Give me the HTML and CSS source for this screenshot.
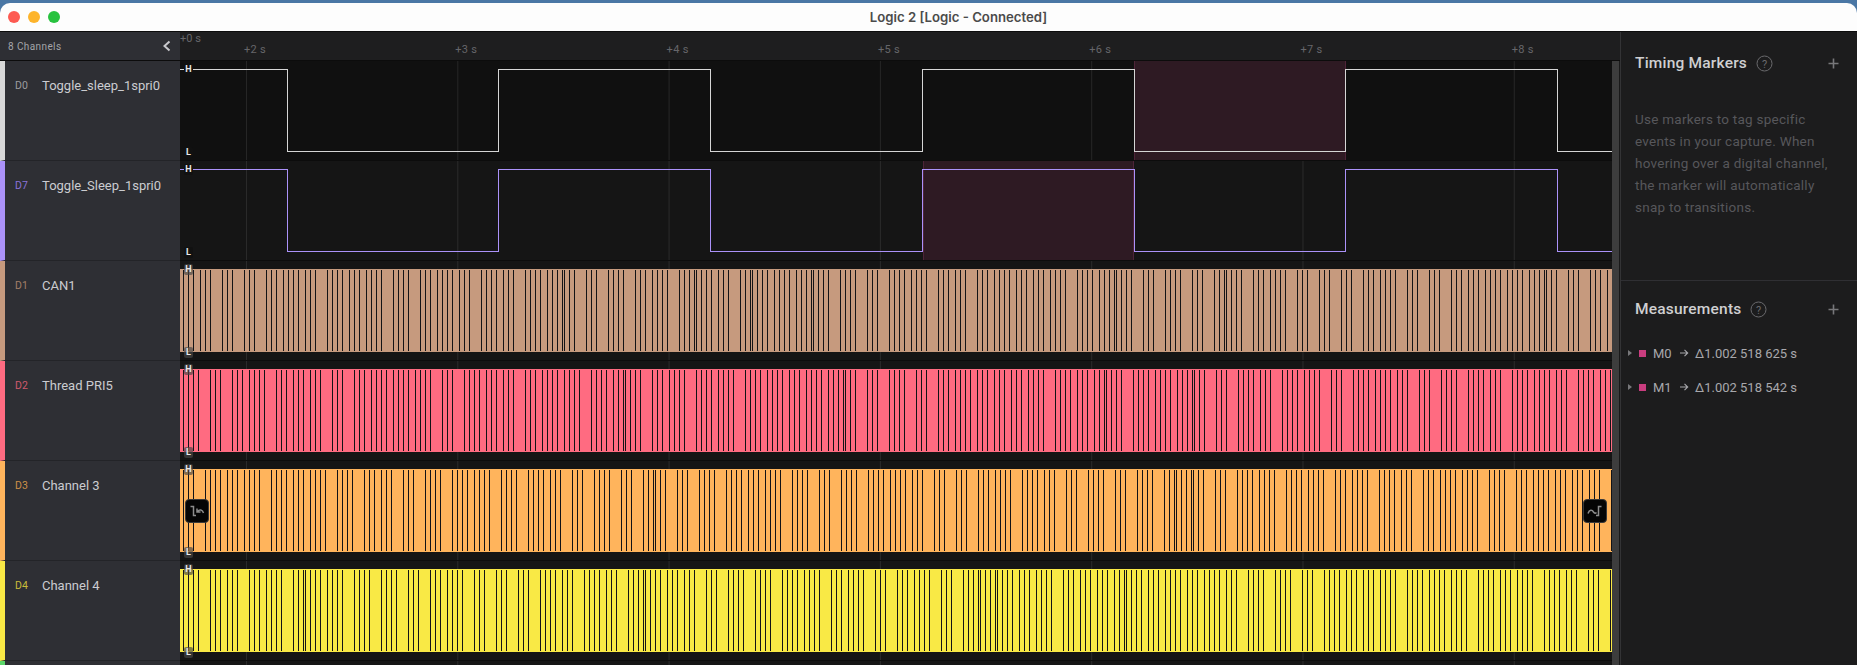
FILE: index.html
```html
<!DOCTYPE html>
<html lang="en">
<head>
  <meta charset="UTF-8" />
  <title>Logic 2</title>
  <link rel="stylesheet" href="styles.css">
</head>
<body>
  <div class="window">
    <div class="titlebar">
      <div class="lights">
        <span class="light red"></span>
        <span class="light yellow"></span>
        <span class="light green"></span>
      </div>
      <div class="title">Logic 2 [Logic - Connected]</div>
    </div>

    <div class="app">
      <div class="sidebar">
        <div class="side-head">
          <span>8 Channels</span>
          <svg class="chevron" width="10" height="12" viewBox="0 0 10 12"><path d="M7.5 1.5 L2.5 6 L7.5 10.5" /></svg>
        </div>
        <div class="chan d0"><span class="chan-id">D0</span><span class="chan-name">Toggle_sleep_1spri0</span></div>
        <div class="chan d7"><span class="chan-id">D7</span><span class="chan-name">Toggle_Sleep_1spri0</span></div>
        <div class="chan d1"><span class="chan-id">D1</span><span class="chan-name">CAN1</span></div>
        <div class="chan d2"><span class="chan-id">D2</span><span class="chan-name">Thread PRI5</span></div>
        <div class="chan d3"><span class="chan-id">D3</span><span class="chan-name">Channel 3</span></div>
        <div class="chan d4"><span class="chan-id">D4</span><span class="chan-name">Channel 4</span></div>
        <div class="chan d5"></div>
      </div>

      <div class="timeline">
        <div class="ruler">
          <div class="ruler-zero">+0 s</div>
          <div class="ruler-ticks">
            <span>+2 s</span><span>+3 s</span><span>+4 s</span><span>+5 s</span><span>+6 s</span><span>+7 s</span><span>+8 s</span>
          </div>
        </div>
        <div class="body">
          <div class="signals">
            <div class="signal first">
              <div class="marker marker-d0"></div>
              <svg class="trace" width="1432" height="99"><path class="stroke-d0" d="M0 8.5 H107.5 V90.5 H318.5 V8.5 H530.5 V90.5 H742.5 V8.5 H954.5 V90.5 H1165.5 V8.5 H1377.5 V90.5 H1432" /></svg>
              <span class="level high plain">H</span><span class="level low plain">L</span>
            </div>
            <div class="signal">
              <div class="marker marker-d7"></div>
              <svg class="trace" width="1432" height="99"><path class="stroke-d7" d="M0 8.5 H107.5 V90.5 H318.5 V8.5 H530.5 V90.5 H742.5 V8.5 H954.5 V90.5 H1165.5 V8.5 H1377.5 V90.5 H1432" /></svg>
              <span class="level high plain">H</span><span class="level low plain">L</span>
            </div>
            <div class="signal">
              <div class="band fill-d1"><svg class="edges" data-seed="11" width="1432" height="83"></svg></div>
              <span class="level high">H</span><span class="level low">L</span>
            </div>
            <div class="signal">
              <div class="band fill-d2"><svg class="edges" data-seed="29" width="1432" height="83"></svg></div>
              <span class="level high">H</span><span class="level low">L</span>
            </div>
            <div class="signal">
              <div class="band fill-d3"><svg class="edges" data-seed="47" width="1432" height="83"></svg></div>
              <span class="level high">H</span><span class="level low">L</span>
              <button class="jump jump-left">
                <svg width="18" height="18" viewBox="0 0 18 18"><path d="M2.5 4.5 H5.5 V13.5 H8 M15.5 11 C14.5 7.5 11.5 7 9.5 9.5 M9 6.5 V10 H12.5" /></svg>
              </button>
              <button class="jump jump-right">
                <svg width="18" height="18" viewBox="0 0 18 18"><path d="M2 11.5 C3.5 7.5 6 7.5 7.5 10 C8.5 11.5 9.5 11.5 10.5 10.5 M10 13.5 H12.5 V4.5 H15.5" /></svg>
              </button>
            </div>
            <div class="signal">
              <div class="band fill-d4"><svg class="edges" data-seed="83" width="1432" height="83"></svg></div>
              <span class="level high">H</span><span class="level low">L</span>
            </div>
            <div class="signal"></div>
          </div>
          <div class="scrollbar"></div>
        </div>
      </div>

      <div class="panel">
        <div class="section timing">
          <div class="section-head">
            <span class="section-title">Timing Markers</span>
            <svg class="help" width="17" height="17" viewBox="0 0 17 17"><circle cx="8.5" cy="8.5" r="7.5" /><text x="8.5" y="12.5" text-anchor="middle">?</text></svg>
            <svg class="plus" width="11" height="11" viewBox="0 0 11 11"><path d="M5.5 0.5 V10.5 M0.5 5.5 H10.5" /></svg>
          </div>
          <p class="hint">Use markers to tag specific events in your capture. When hovering over a digital channel, the marker will automatically snap to transitions.</p>
        </div>
        <div class="section">
          <div class="section-head">
            <span class="section-title">Measurements</span>
            <svg class="help" width="17" height="17" viewBox="0 0 17 17"><circle cx="8.5" cy="8.5" r="7.5" /><text x="8.5" y="12.5" text-anchor="middle">?</text></svg>
            <svg class="plus" width="11" height="11" viewBox="0 0 11 11"><path d="M5.5 0.5 V10.5 M0.5 5.5 H10.5" /></svg>
          </div>
          <div class="measure">
            <span class="caret"></span><span class="swatch"></span><span class="m-name">M0</span>
            <svg class="arrow" width="10" height="10" viewBox="0 0 10 10"><path d="M1 5 H8.5 M5.5 1.8 L8.7 5 L5.5 8.2" /></svg>
            <span class="m-value">Δ1.002 518 625 s</span>
          </div>
          <div class="measure">
            <span class="caret"></span><span class="swatch"></span><span class="m-name">M1</span>
            <svg class="arrow" width="10" height="10" viewBox="0 0 10 10"><path d="M1 5 H8.5 M5.5 1.8 L8.7 5 L5.5 8.2" /></svg>
            <span class="m-value">Δ1.002 518 542 s</span>
          </div>
        </div>
      </div>
    </div>
  </div>

  <script src="trace.js"></script>
</body>
</html>
```

FILE: styles.css
```css
* {
  box-sizing: border-box;
}
body, html {
  margin: 0;
  padding: 0;
  height: 100%;
  overflow: hidden;
  background: #4a77a5;
  font-family: Roboto, sans-serif;
}
.window {
  height: 100%;
  padding-top: 3px;
  display: flex;
  flex-direction: column;
}

/* title bar */
.titlebar {
  flex: 0 0 29px;
  position: relative;
  display: flex;
  align-items: center;
  justify-content: center;
  background: #fdfdfd;
  border-bottom: 1px solid #0c0c0c;
  border-radius: 10px 10px 0 0;
}
.lights {
  position: absolute;
  left: 8px;
  top: 8px;
  display: flex;
  gap: 8px;
}
.light {
  width: 12px;
  height: 12px;
  border-radius: 50%;
}
.light.red { background: #fd5a52; }
.light.yellow { background: #fdb42c; }
.light.green { background: #28c23f; }
.title {
  font-family: Inter, sans-serif;
  font-size: 13.2px;
  font-weight: 600;
  color: #4b4b4b;
  margin: -1px 0 0 60px;
}

.app {
  flex: 1;
  display: flex;
  min-height: 0;
}

/* channel list */
.sidebar {
  flex: 0 0 180px;
  background: #2e2f34;
  overflow: hidden;
}
.side-head {
  height: 29px;
  display: flex;
  align-items: center;
  justify-content: space-between;
  padding: 0 8px;
  font-size: 10px;
  letter-spacing: 0.4px;
  color: #a4a5a9;
  border-bottom: 1px solid #0c0c0c;
}
.chevron path {
  fill: none;
  stroke: #c8c8cc;
  stroke-width: 2;
}
.chan {
  height: 100px;
  padding: 17px 0 0 10px;
  display: flex;
  align-items: flex-start;
  border-left: 5px solid;
  border-bottom: 1px solid #232428;
}
.chan-id {
  width: 27px;
  font-size: 10.5px;
  line-height: 16px;
}
.chan-name {
  font-size: 13px;
  line-height: 16px;
  color: #cbccd0;
}
.d0 { border-left-color: #d8d8d8; }
.d0 .chan-id { color: #9c9c9f; }
.d7 { border-left-color: #ab92f9; }
.d7 .chan-id { color: #8a72d8; }
.d1 { border-left-color: #c69a7e; }
.d1 .chan-id { color: #a37f68; }
.d2 { border-left-color: #ff6b81; }
.d2 .chan-id { color: #cf5a6c; }
.d3 { border-left-color: #ffb45c; }
.d3 .chan-id { color: #cc9048; }
.d4 { border-left-color: #f9e945; }
.d4 .chan-id { color: #c9bc3a; }
.d5 { border-left-color: #5ad66a; }

/* time ruler and signals */
.timeline {
  flex: 0 0 1441px;
  display: flex;
  flex-direction: column;
  background: #1e1e1f;
  border-right: 1px solid #333335;
  min-width: 0;
}
.ruler {
  height: 29px;
  overflow: hidden;
  font-size: 11px;
  letter-spacing: 0.3px;
  color: #66666a;
  border-bottom: 1px solid #0c0c0c;
}
.ruler-zero {
  line-height: 14px;
  letter-spacing: 0;
}
.ruler-ticks {
  display: flex;
  padding-left: 64px;
  line-height: 11px;
  margin-top: -2px;
}
.ruler-ticks span {
  flex: 0 0 211.3px;
}
.body {
  flex: 1;
  display: flex;
  min-height: 0;
}
.signals {
  flex: 0 0 1432px;
  overflow: hidden;
}
.scrollbar {
  flex: 1;
  background: #3d3d3d;
  border-right: 1px solid #191919;
}
.signal {
  position: relative;
  height: 100px;
  padding-top: 8px;
  border-bottom: 1px solid #0c0c0c;
  background-color: #151515;
  background-image: linear-gradient(to right, rgba(255, 255, 255, 0.09) 1px, transparent 1px);
  background-size: 211.3px 100%;
  background-position: 66px 0;
}
.signal.first {
  background-color: #101010;
}
.trace {
  position: absolute;
  left: 0;
  top: 0;
  fill: none;
  shape-rendering: crispEdges;
}
.stroke-d0 { stroke: #d6d6d6; }
.stroke-d7 { stroke: #ab92f9; }
.marker {
  position: absolute;
  top: 0;
  bottom: 0;
  background: #2e1a23;
  border-left: 1px solid #4e2438;
  border-right: 1px solid #4e2438;
}
.marker-d0 { left: 954px; width: 212px; }
.marker-d7 { left: 743px; width: 211px; }
.band {
  height: 83px;
}
.fill-d1 { background: #c69a7e; }
.fill-d2 { background: #ff6b81; }
.fill-d3 { background: #ffb45c; }
.fill-d4 { background: #f9e945; }
.edges {
  display: block;
  shape-rendering: crispEdges;
}
.edges path {
  stroke: #131316;
  fill: none;
}
.level {
  position: absolute;
  left: 4px;
  width: 9px;
  height: 11px;
  border-radius: 2px;
  font-size: 9px;
  font-weight: 700;
  line-height: 11px;
  text-align: center;
  color: #e8e8e8;
  background: rgba(70, 70, 70, 0.65);
}
.level.plain {
  background: #111;
}
.level.high { top: 3px; }
.level.low { top: 86px; }
.jump {
  position: absolute;
  top: 38px;
  width: 24px;
  height: 24px;
  padding: 2px;
  background: #050505;
  border: 1px solid #3a3a3a;
  border-radius: 4px;
}
.jump svg {
  display: block;
}
.jump path {
  fill: none;
  stroke: #8d8d8d;
  stroke-width: 1.5;
}
.jump-left { left: 5px; }
.jump-right { right: 5px; }

/* right panel */
.panel {
  flex: 1;
  background: #1c1c1d;
  min-width: 0;
}
.section {
  padding: 18px 18px 0 14px;
}
.section.timing {
  height: 249px;
  padding-top: 21px;
  border-bottom: 1px solid #2f2f33;
}
.section-head {
  display: flex;
  align-items: center;
  height: 20px;
}
.section-title {
  font-size: 15.5px;
  font-weight: 500;
  line-height: 20px;
  letter-spacing: 0.2px;
  color: #cfcfd1;
}
.help {
  margin-left: 9px;
  fill: none;
  stroke: #6a6a6d;
}
.help text {
  font-family: Roboto, sans-serif;
  font-size: 11px;
  fill: #6a6a6d;
  stroke: none;
}
.plus {
  margin-left: auto;
}
.plus path {
  stroke: #77777a;
  stroke-width: 1.6;
}
.hint {
  margin: 35px 0 0;
  width: 205px;
  font-size: 13.5px;
  line-height: 22px;
  letter-spacing: 0.25px;
  color: #57575b;
}
.measure {
  display: flex;
  align-items: center;
  height: 34px;
  margin-left: -7px;
  font-size: 13px;
  color: #a8a8ac;
}
.section-head + .measure {
  margin-top: 17px;
}
.caret {
  width: 0;
  height: 0;
  border-left: 4px solid #77777a;
  border-top: 3px solid transparent;
  border-bottom: 3px solid transparent;
  margin-right: 7px;
}
.swatch {
  width: 7px;
  height: 7px;
  background: #c93d7f;
  margin-right: 7px;
}
.m-name {
  width: 26px;
}
.arrow {
  margin-right: 6px;
}
.arrow path {
  fill: none;
  stroke: #a8a8ac;
  stroke-width: 1.1;
}
```

FILE: trace.js
```js
// draws the dense edges of the busy channels; seeded so every load looks the same
function drawEdges(svg) {
  let seed = Number(svg.dataset.seed);
  const rand = () => {
    seed = (seed * 16807) % 2147483647;
    return seed / 2147483647;
  };

  let d = "";
  let x = Math.floor(rand() * 5) + 3.5;
  while (x < 1432) {
    const run = rand() < 0.5 ? 3 : 4;
    for (let i = 0; i < run && x < 1432; i++) {
      d += `M${x} 1V82`;
      x += 5;
    }
    const r = rand();
    x += r < 0.45 ? 2 : r < 0.95 ? 7 : -3;
  }

  const path = document.createElementNS("http://www.w3.org/2000/svg", "path");
  path.setAttribute("d", d);
  svg.appendChild(path);
}

document.querySelectorAll(".edges").forEach(drawEdges);
```
